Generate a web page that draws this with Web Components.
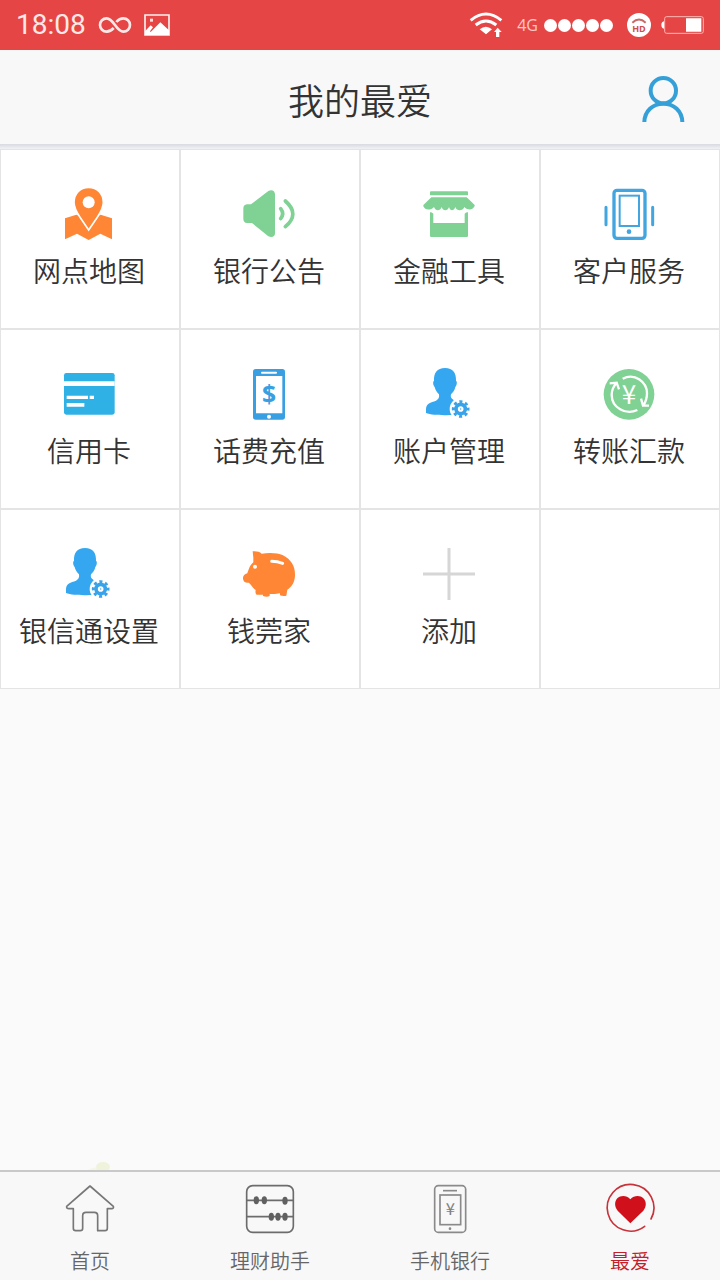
<!DOCTYPE html>
<html lang="zh-CN">
<head>
<meta charset="utf-8">
<meta name="viewport" content="width=device-width, initial-scale=1">
<title>我的最爱</title>
<style>
  body {
    margin: 0;
    font-family: "Noto Sans CJK SC", "Noto Sans", sans-serif;
    font-weight: 350;
    color: #333;
    background: #fafafa;
  }
</style>
</head>
<body>

<app-page>
  <status-bar slot="top" time="18:08" network="4G"></status-bar>
  <page-header slot="top">我的最爱</page-header>

  <tile-grid>
    <tile-link icon="map">网点地图</tile-link>
    <tile-link icon="speaker">银行公告</tile-link>
    <tile-link icon="shop">金融工具</tile-link>
    <tile-link icon="phone">客户服务</tile-link>
    <tile-link icon="card">信用卡</tile-link>
    <tile-link icon="recharge">话费充值</tile-link>
    <tile-link icon="account">账户管理</tile-link>
    <tile-link icon="transfer">转账汇款</tile-link>
    <tile-link icon="account">银信通设置</tile-link>
    <tile-link icon="pig">钱莞家</tile-link>
    <tile-link icon="plus">添加</tile-link>
    <tile-blank></tile-blank>
  </tile-grid>

  <tab-bar slot="bottom">
    <tab-item icon="home">首页</tab-item>
    <tab-item icon="abacus">理财助手</tab-item>
    <tab-item icon="bank">手机银行</tab-item>
    <tab-item icon="heart" active>最爱</tab-item>
  </tab-bar>
</app-page>

<script>
// Each icon: [viewBox, markup]
const gear = `
  <circle cx="113" cy="123" r="33" fill="#fff"/>
  <circle cx="113" cy="123" r="14" fill="none" stroke="#38a3ea" stroke-width="11"/>
  <circle cx="113" cy="123" r="22" fill="none" stroke="#38a3ea" stroke-width="9" stroke-dasharray="9 8.28" stroke-dashoffset="4.5"/>
  <circle cx="113" cy="123" r="2" fill="#38a3ea"/>`;

const ICONS = {
  map: ['0 0 156 156', `
    <path fill="#ff8635" d="M6 91 40 80 77 96 113 80 147 91V154L112 137 77 156 42 137 6 154Z"/>
    <path fill="#ff8635" stroke="#fff" stroke-width="5" d="M77-2C51-2 33 17 33 43 33 60 42 74 50 86L77 126 104 86C112 74 121 60 121 43 121 17 103-2 77-2Z"/>
    <circle cx="77" cy="43" r="18" fill="#fff"/>`],
  speaker: ['0 0 156 156', `
    <path fill="#80d194" d="M12 49H24L76 9C86 3 96 8 96 19V136C96 147 86 150 76 145L27 105H12Q1 104 1 92V62Q1 50 12 49Z"/>
    <path fill="none" stroke="#80d194" stroke-width="11" stroke-linecap="round" d="M113 62Q125 77 113 92M127 39Q172 78 127 116"/>`],
  shop: ['0 0 156 156', `
    <path fill="#80d194" d="M24 10H132Q135 10 135 13V22H21V13Q21 10 24 10ZM25 28H131L155 51Q156 54 153 57C149 66 135 68 124 57C119 70 101 70 97 57C92 70 82 70 78 57C74 70 60 70 56 57C51 70 38 70 33 57C22 69 5 66 1 55Q0 52 2 50Z"/>
    <path fill="#80d194" d="M21 73Q27 71 31 77V105H125V77Q129 71 135 73V143Q135 147 131 147H25Q21 147 21 143Z"/>`],
  phone: ['0 0 156 156', `
    <g fill="none" stroke="#42a5df">
      <rect x="33" y="7" width="93" height="144" rx="9" stroke-width="10"/>
      <rect x="50" y="23" width="58" height="91" stroke-width="6"/>
      <path stroke-width="9" stroke-linecap="round" d="M9 58V110M149 58V110"/>
    </g>
    <circle cx="78" cy="131" r="7" fill="#42a5df"/>`],
  card: ['0 0 156 156', `
    <rect x="3" y="15" width="152" height="125" rx="7" fill="#30b1e5"/>
    <path fill="#fff" d="M3 40H155V54H3ZM11 83H75V93H11ZM80 83H93V93H80ZM11 105H64V116H11Z"/>`],
  recharge: ['0 0 156 156', `
    <rect x="30" y="3" width="96" height="152" rx="8" fill="#38a0e2"/>
    <path fill="#fff" d="M39 24H118V136H39Z"/>
    <path stroke="#fff" stroke-width="6" stroke-linecap="round" d="M57 14H99"/>
    <circle cx="78" cy="146" r="6" fill="#fff"/>
    <text x="78" y="105" text-anchor="middle" font-family="Open Sans, sans-serif" font-weight="700" font-size="74" fill="#38a0e2">$</text>`],
  account: ['0 0 156 156', `
    <path fill="#35a7f0" d="M66 0C42 0 32 15 33 38C29 40 30 51 35 57C37 67 43 74 48 79C50 89 46 94 39 98C23 104 9 106 9 124V135C29 143 78 142 92 140V96C84 92 82 87 84 79C90 73 95 67 97 57C102 51 103 40 99 38C100 15 90 0 66 0Z"/>${gear}`],
  transfer: ['0 0 156 156', `
    <circle cx="78" cy="79" r="76" fill="#80d194"/>
    <g fill="none" stroke="#fff" stroke-width="7">
      <path d="M59 32C96 13 132 43 132 76Q132 96 121 113M114 92 120 113 138 113M103 126C68 143 26 118 26 80Q26 61 41 44M20 46 41 44 48 64"/>
    </g>
    <text x="78" y="107" text-anchor="middle" font-family="Noto Sans CJK SC, sans-serif" font-weight="400" font-size="78" fill="#fff">¥</text>`],
  pig: ['0 0 156 156', `
    <path fill="#ff8635" d="M29 10C40 9 50 11 56 17C78 13 104 14 120 22C144 34 156 55 156 80C156 101 147 115 133 125L130 143Q121 146 111 142V136C99 139 88 138 80 138V144Q71 148 60 144V140H41Q36 138 38 126C27 118 23 107 17 104C9 105 2 103 0 93C-1 84 4 78 13 76C17 65 20 52 31 43V29Z"/>
    <circle cx="36" cy="56" r="6" fill="#fff"/>
    <path stroke="#fff" stroke-width="9" stroke-linecap="round" fill="none" d="M86 40Q103 40 119 46"/>`],
  plus: ['0 0 156 156', `<path stroke="#d6d6d6" stroke-width="9" d="M0 78H156M78 0V156"/>`],

  home: ['0 0 144 144', `
    <path fill="none" stroke="#777" stroke-width="5" stroke-linejoin="round" d="M72 3 2 64Q1 71 9 71H22V130Q22 137 29 137H43Q50 137 50 130V92Q50 82 60 82H85Q95 82 95 92V137H117Q124 137 124 130V71H137Q144 71 142 64Z"/>`],
  abacus: ['0 0 144 144', `
    <g fill="none" stroke="#6c6c6c" stroke-width="5">
      <rect x="2" y="2" width="140" height="140" rx="18"/>
      <path d="M2 46H142M2 95H142"/>
    </g>
    <g fill="#606060">
      <ellipse cx="31" cy="46" rx="8" ry="12"/><ellipse cx="55" cy="46" rx="8" ry="12"/><ellipse cx="117" cy="47" rx="8" ry="12"/>
      <ellipse cx="76" cy="95" rx="8" ry="12"/><ellipse cx="96" cy="95" rx="8" ry="12"/><ellipse cx="117" cy="95" rx="8" ry="12"/>
    </g>`],
  bank: ['0 0 144 144', `
    <g fill="none" stroke="#8a8a8a" stroke-width="5">
      <rect x="26" y="2" width="93" height="140" rx="11"/>
      <rect x="42" y="30" width="62" height="89"/>
      <path d="M51 17H93"/>
    </g>
    <circle cx="72" cy="131" r="4" fill="#8a8a8a"/>
    <text x="73" y="91" text-anchor="middle" font-family="Noto Sans CJK SC, sans-serif" font-weight="400" font-size="50" fill="#808080">¥</text>`],
  heart: ['0 0 144 144', `
    <path fill="none" stroke="#c8323a" stroke-width="5" stroke-linecap="round" d="M135 102A70 70 0 1 0 116 124"/>
    <path fill="#d0111b" d="M73 115 35 77C25 66 25 49 34 40C45 30 62 31 73 43C84 31 102 30 112 40C122 49 122 66 112 77Z"/>`],
  person: ['0 0 144 144', `
    <g fill="none" stroke="#35a0d8" stroke-width="12">
      <circle cx="70" cy="47" r="38"/>
      <path d="M13 141C14 108 38 86 70 86S126 108 127 141"/>
    </g>`],

  infinity: ['0 0 96 48', `
    <path fill="none" stroke="#ffe9e8" stroke-width="8" d="M44 33C36 42 30 44 23 44A20 20 0 0 1 23 4C44 4 52 44 73 44A20 20 0 0 0 73 4C65 4 58 8 52 15"/>`],
  picture: ['0 0 78 66', `
    <path fill="none" stroke="#fff0ef" stroke-width="5" d="M3 3H75V63H3Z"/>
    <path fill="#fff" d="M3 52 20 34 27 40 18 52 20 54 49 25 75 49V63H3Z"/>
    <path fill="#ffe0de" d="M18 14H27V23H18Z"/>`],
  wifi: ['0 0 102 78', `
    <g fill="none" stroke="#fff" stroke-width="9">
      <path d="M5 25Q51-13 97 25M20 39Q51 15 82 39"/>
    </g>
    <path fill="#fff" d="M32 52Q51 37 69 52L51 67ZM86 47 98 60H91V75H81V60H75Z"/>`],
  hd: ['0 0 72 72', `
    <circle cx="36" cy="36" r="36" fill="#fff"/>
    <path fill="none" stroke="#c96a66" stroke-width="6" d="M16 29Q36 10 56 29"/>
    <text x="36" y="56" text-anchor="middle" font-family="Open Sans, sans-serif" font-weight="700" font-size="27" fill="#d24c4a">HD</text>`],
  battery: ['0 0 129 54', `
    <rect x="11" y="2" width="116" height="50" rx="6" fill="none" stroke="#ffb8b4" stroke-width="3"/>
    <path fill="#fff" d="M75 7H121V47H75ZM9 16V38Q1 36 1 27T9 16Z"/>`],
};

class AppIcon extends HTMLElement {
  constructor() {
    super();
    this.attachShadow({ mode: 'open' });
  }

  connectedCallback() {
    const [box, markup] = ICONS[this.getAttribute('name')];
    this.shadowRoot.innerHTML = `
      <style>
        :host { display: block; flex: none; }
        svg { display: block; width: 100%; height: 100%; overflow: visible; }
      </style>
      <svg viewBox="${box}" aria-hidden="true">${markup}</svg>
    `;
  }
}
customElements.define('app-icon', AppIcon);

class AppPage extends HTMLElement {
  constructor() {
    super();
    this.attachShadow({ mode: 'open' });
  }

  connectedCallback() {
    this.shadowRoot.innerHTML = `
      <style>
        :host { display: flex; flex-direction: column; min-height: 100vh; }
        main { flex: 1; display: flex; flex-direction: column; }
        .leaf {
          width: 24px;
          height: 8px;
          margin: auto 0 0 88px;
        }
      </style>
      <slot name="top"></slot>
      <main>
        <slot></slot>
        <svg class="leaf" viewBox="0 0 24 8" aria-hidden="true">
          <path fill="#f4f6e6" d="M0 8Q8 3 14 8Z"/>
          <ellipse cx="15" cy="5" rx="7" ry="5" fill="#eff3dc"/>
        </svg>
      </main>
      <slot name="bottom"></slot>
    `;
  }
}
customElements.define('app-page', AppPage);

class StatusBar extends HTMLElement {
  constructor() {
    super();
    this.attachShadow({ mode: 'open' });
  }

  connectedCallback() {
    this.shadowRoot.innerHTML = `
      <style>
        :host {
          display: flex;
          align-items: center;
          justify-content: space-between;
          height: 50px;
          padding: 0 16px;
          box-sizing: border-box;
          background: #e64545;
          color: #ffe9e8;
        }
        div { display: flex; align-items: center; }
        .left { gap: 13px; }
        .right { gap: 14px; }
        time { font: 400 28px/50px Roboto, sans-serif; }
        .signal { gap: 6px; }
        .network { font: 400 16px/50px "Open Sans", sans-serif; color: #ffc8c5; }
        .dots { gap: 1px; }
        .dots i { width: 13px; height: 13px; border-radius: 50%; background: #fff; }
        .power { gap: 10px; }
        .infinity { width: 32px; height: 16px; }
        .picture { width: 26px; height: 22px; }
        .wifi { width: 34px; height: 26px; }
        .hd { width: 24px; height: 24px; }
        .battery { width: 43px; height: 18px; }
      </style>
      <div class="left">
        <time>${this.getAttribute('time')}</time>
        <app-icon class="infinity" name="infinity"></app-icon>
        <app-icon class="picture" name="picture"></app-icon>
      </div>
      <div class="right">
        <app-icon class="wifi" name="wifi"></app-icon>
        <div class="signal">
          <span class="network">${this.getAttribute('network')}</span>
          <div class="dots"><i></i><i></i><i></i><i></i><i></i></div>
        </div>
        <div class="power">
          <app-icon class="hd" name="hd"></app-icon>
          <app-icon class="battery" name="battery"></app-icon>
        </div>
      </div>
    `;
  }
}
customElements.define('status-bar', StatusBar);

class PageHeader extends HTMLElement {
  constructor() {
    super();
    this.attachShadow({ mode: 'open' });
  }

  connectedCallback() {
    this.shadowRoot.innerHTML = `
      <style>
        :host {
          display: grid;
          grid-template-columns: 1fr auto 1fr;
          align-items: center;
          height: 99px;
          padding: 0 32px 2px;
          box-sizing: border-box;
          background: linear-gradient(#d9dae0, #f1f2f6) bottom / 100% 5px no-repeat #f8f8f8;
        }
        h1 { grid-column: 2; margin: 0; font-size: 36px; line-height: 52px; font-weight: inherit; }
        button { justify-self: end; padding: 0; border: 0; background: none; }
        app-icon { width: 48px; height: 48px; }
      </style>
      <h1><slot></slot></h1>
      <button type="button" aria-label="个人中心"><app-icon name="person"></app-icon></button>
    `;
  }
}
customElements.define('page-header', PageHeader);

class TileGrid extends HTMLElement {
  constructor() {
    super();
    this.attachShadow({ mode: 'open' });
  }

  connectedCallback() {
    this.shadowRoot.innerHTML = `
      <style>
        :host { display: grid; grid-template-columns: repeat(4, 1fr); grid-auto-rows: 180px; }
      </style>
      <slot></slot>
    `;
  }
}
customElements.define('tile-grid', TileGrid);

class TileLink extends HTMLElement {
  constructor() {
    super();
    this.attachShadow({ mode: 'open' });
  }

  connectedCallback() {
    this.shadowRoot.innerHTML = `
      <style>
        :host { display: flex; border: 1px solid #e4e4e4; background: #fff; }
        a {
          flex: 1;
          display: flex;
          flex-direction: column;
          align-items: center;
          gap: 10px;
          padding: 38px 2px 0 0;
          font-size: 28px;
          line-height: 40px;
          white-space: nowrap;
          color: inherit;
          text-decoration: none;
        }
        app-icon { width: 52px; height: 52px; }
      </style>
      <a href="#${this.getAttribute('icon')}">
        <app-icon name="${this.getAttribute('icon')}"></app-icon>
        <span><slot></slot></span>
      </a>
    `;
  }
}
customElements.define('tile-link', TileLink);

class TileBlank extends HTMLElement {
  constructor() {
    super();
    this.attachShadow({ mode: 'open' });
  }

  connectedCallback() {
    this.shadowRoot.innerHTML = `
      <style>
        :host { display: block; border: 1px solid #e4e4e4; background: #fff; }
      </style>
    `;
  }
}
customElements.define('tile-blank', TileBlank);

class TabBar extends HTMLElement {
  constructor() {
    super();
    this.attachShadow({ mode: 'open' });
  }

  connectedCallback() {
    this.shadowRoot.innerHTML = `
      <style>
        :host { display: block; border-top: 2px solid #c8caca; background: #f8f8f8; }
        nav { display: grid; grid-template-columns: repeat(4, 1fr); }
      </style>
      <nav><slot></slot></nav>
    `;
  }
}
customElements.define('tab-bar', TabBar);

class TabItem extends HTMLElement {
  constructor() {
    super();
    this.attachShadow({ mode: 'open' });
  }

  connectedCallback() {
    this.shadowRoot.innerHTML = `
      <style>
        :host { display: block; color: #666; }
        :host([active]) { color: #c2202a; }
        a {
          display: flex;
          flex-direction: column;
          align-items: center;
          gap: 14px;
          padding: 13px 0 5px;
          font-size: 20px;
          line-height: 28px;
          color: inherit;
          text-decoration: none;
        }
        app-icon { width: 48px; height: 48px; }
      </style>
      <a href="#${this.getAttribute('icon')}">
        <app-icon name="${this.getAttribute('icon')}"></app-icon>
        <span><slot></slot></span>
      </a>
    `;
  }
}
customElements.define('tab-item', TabItem);
</script>
</body>
</html>
